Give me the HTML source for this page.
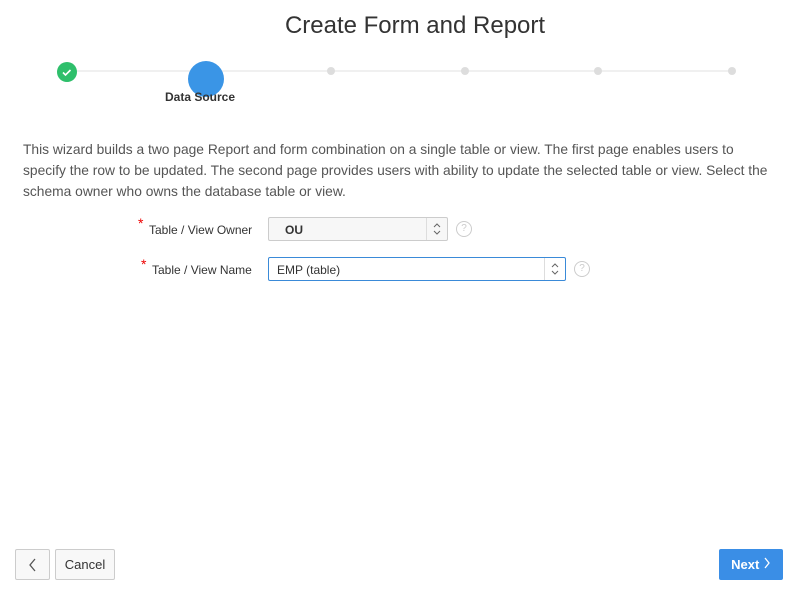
<!DOCTYPE html>
<html><head><style>
body{margin:0;width:799px;height:597px;background:#fff;font-family:"Liberation Sans",sans-serif;color:#333;position:relative;overflow:hidden}
.abs{position:absolute}
h1{position:absolute;top:12px;left:0;width:830px;text-align:center;font-weight:normal;font-size:24px;margin:0;color:#333}
.line{top:70px;left:67px;width:665px;height:2px;background:#f0f0f0}
.dot{width:8px;height:8px;border-radius:50%;background:#ddd;top:67px}
.desc{top:139px;left:23px;width:752px;font-size:13.8px;line-height:21px;color:#555}
.lbl{font-size:12px;color:#333}
.star{color:#e00;font-size:14px}
.sel{border:1px solid #ccc;border-radius:2px;background:#f7f7f7;height:22px;font-size:12px}
.arr{position:absolute;right:0;top:0;width:20px;height:100%;border-left:1px solid #ddd}
.arr svg{position:absolute;left:5px;top:3px}
.help{width:14px;height:14px;border:1px solid #ccc;border-radius:50%;color:#ccc;font-size:10px;text-align:center;line-height:14px}
.btn{border:1px solid #ccc;border-radius:2px;background:#f8f8f8;font-size:12px;height:31px;box-sizing:border-box;text-align:center;line-height:29px}
</style></head><body>
<h1>Create Form and Report</h1>
<div class="abs line"></div>
<div class="abs" style="left:57px;top:62px;width:20px;height:20px;border-radius:50%;background:#2ebf6b"><svg width="20" height="20"><path d="M6 10.5l2.5 2.5 5-5" stroke="#fff" stroke-width="1.6" fill="none"/></svg></div>
<div class="abs" style="left:188px;top:61px;width:36px;height:36px;border-radius:50%;background:#3a95e6"></div>
<div class="abs" style="left:165px;top:90px;font-size:12px;font-weight:bold;color:#333">Data Source</div>
<div class="abs dot" style="left:327px"></div>
<div class="abs dot" style="left:461px"></div>
<div class="abs dot" style="left:594px"></div>
<div class="abs dot" style="left:728px"></div>
<div class="abs desc">This wizard builds a two page Report and form combination on a single table or view. The first page enables users to specify the row to be updated. The second page provides users with ability to update the selected table or view. Select the schema owner who owns the database table or view.</div>
<div class="abs star" style="left:138px;top:215px">*</div>
<div class="abs lbl" style="left:149px;top:223px">Table / View Owner</div>
<div class="abs sel" style="left:268px;top:217px;width:178px"><span style="position:absolute;left:16px;top:5px;font-weight:bold">OU</span><div class="arr"><svg width="10" height="16"><path d="M2 6l3-3 3 3M2 10l3 3 3-3" stroke="#666" fill="none"/></svg></div></div>
<div class="abs help" style="left:456px;top:221px">?</div>
<div class="abs star" style="left:141px;top:256px">*</div>
<div class="abs lbl" style="left:152px;top:263px">Table / View Name</div>
<div class="abs sel" style="left:268px;top:257px;width:296px;background:#fff;border-color:#3a8ad8"><span style="position:absolute;left:8px;top:5px">EMP (table)</span><div class="arr"><svg width="10" height="16"><path d="M2 6l3-3 3 3M2 10l3 3 3-3" stroke="#666" fill="none"/></svg></div></div>
<div class="abs help" style="left:574px;top:261px">?</div>
<div class="abs btn" style="left:15px;top:549px;width:35px"><svg width="10" height="14" style="margin-top:8px"><path d="M7 1L2 7l5 6" stroke="#555" stroke-width="1.3" fill="none"/></svg></div>
<div class="abs btn" style="left:55px;top:549px;width:60px;font-size:13px">Cancel</div>
<div class="abs btn" style="left:719px;top:549px;width:64px;background:#3a8ee6;border-color:#3a8ee6;color:#fff;font-weight:bold;font-size:13px">Next <svg width="8" height="12"><path d="M2 1l4 5-4 5" stroke="#fff" stroke-width="1.3" fill="none"/></svg></div>
</body></html>
